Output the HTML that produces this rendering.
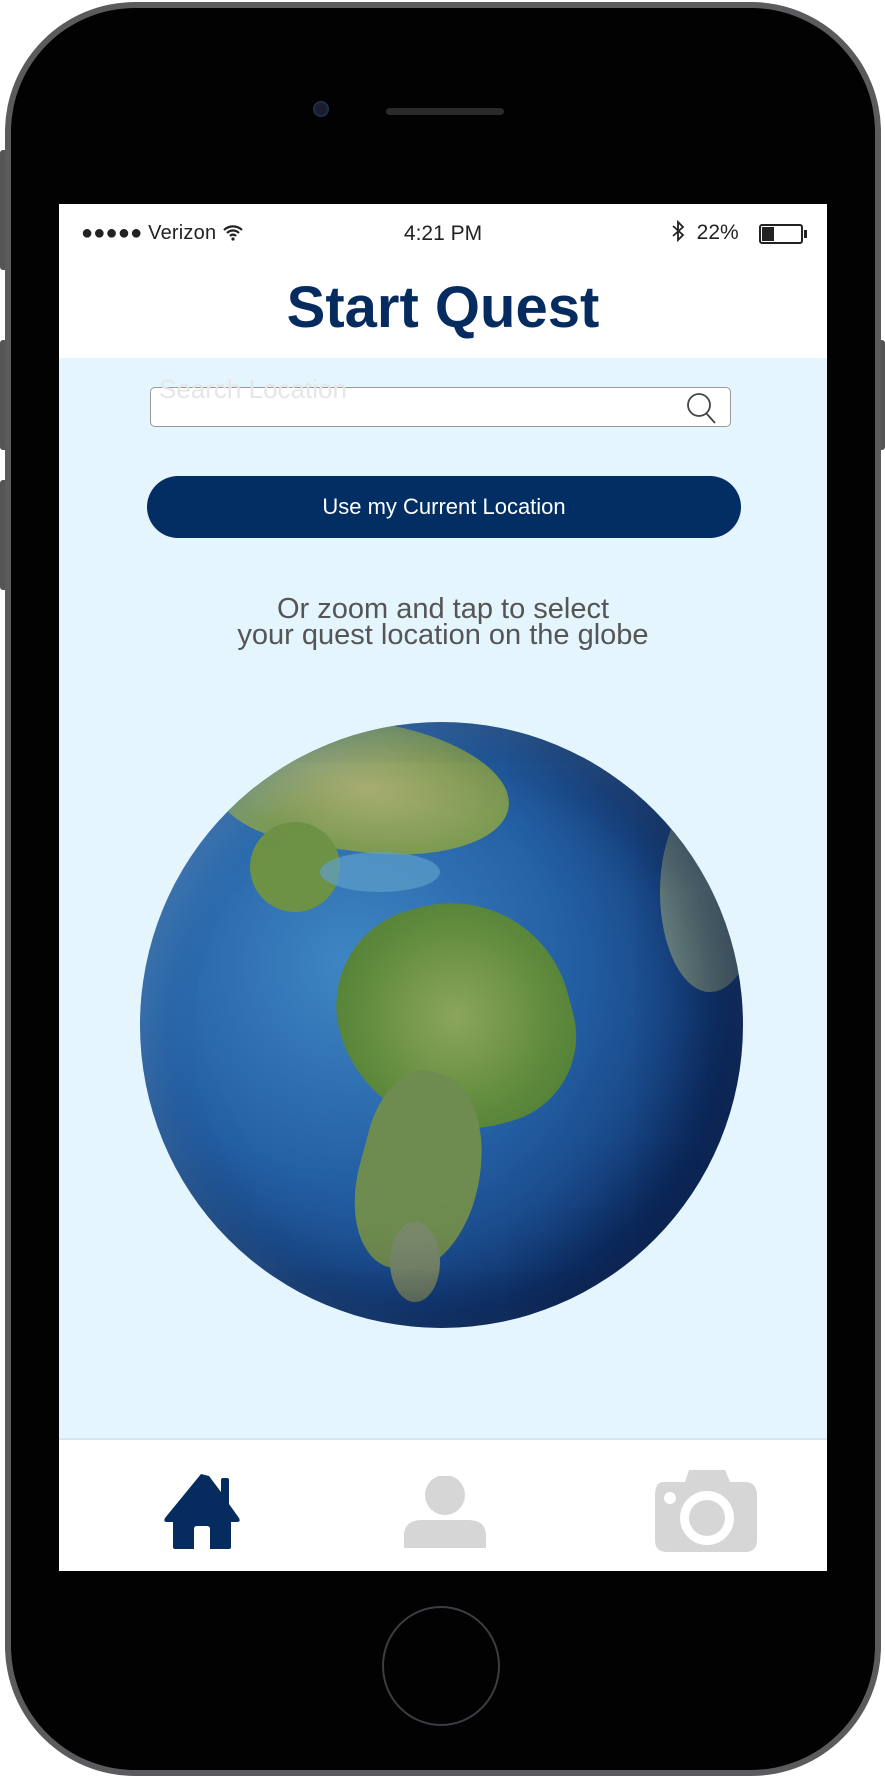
<!DOCTYPE html>
<html><head><meta charset="utf-8"><style>
*{margin:0;padding:0;box-sizing:border-box}
body{width:885px;height:1778px;background:#fff;position:relative;overflow:hidden;font-family:"Liberation Sans",sans-serif}
.abs{position:absolute}
</style></head><body>
<div class="abs" style="left:0;top:150px;width:8px;height:120px;background:#555;border-radius:3px"></div>
<div class="abs" style="left:0;top:340px;width:8px;height:110px;background:#555;border-radius:3px"></div>
<div class="abs" style="left:0;top:480px;width:8px;height:110px;background:#555;border-radius:3px"></div>
<div class="abs" style="right:0;top:340px;width:8px;height:110px;background:#555;border-radius:3px"></div>
<div class="abs" style="left:5px;top:2px;width:876px;height:1774px;border-radius:130px;background:#5b5b5e"></div>
<div class="abs" style="left:11px;top:8px;width:864px;height:1762px;border-radius:124px;background:#020202"></div>
<div class="abs" style="left:313px;top:101px;width:16px;height:16px;border-radius:50%;background:#1a1d2e;box-shadow:inset 0 0 3px #3a4a7a"></div>
<div class="abs" style="left:386px;top:108px;width:118px;height:7px;border-radius:4px;background:#2a2a2a"></div>
<div class="abs" style="left:382px;top:1606px;width:118px;height:120px;border-radius:50%;border:2px solid #3a3d42"></div>
<div class="abs" style="left:59px;top:204px;width:768px;height:1367px;background:#fff;overflow:hidden">
  <div class="abs" style="left:22px;top:18px;font-size:20px;color:#222;letter-spacing:.2px">●●●●● Verizon
    <svg width="22" height="18" viewBox="0 0 22 18" style="vertical-align:-2px"><path d="M2 7a13 13 0 0 1 18 0M5 10a8.5 8.5 0 0 1 12 0M8 13a4 4 0 0 1 6 0" stroke="#222" stroke-width="2.2" fill="none"/><circle cx="11" cy="16" r="1.6" fill="#222"/></svg></div>
  <div class="abs" style="left:0;width:768px;top:18px;text-align:center;font-size:21px;color:#222">4:21 PM</div>
  <div class="abs" style="left:612px;top:16px;font-size:21px;color:#222">
    <svg width="14" height="22" viewBox="0 0 14 22" style="vertical-align:-3px"><path d="M2 6l10 9-5 5V2l5 5-10 9" stroke="#222" stroke-width="1.8" fill="none"/></svg>
    &nbsp;22%</div>
  <div class="abs" style="left:700px;top:20px;width:44px;height:20px;border:2px solid #222;border-radius:3px"><div style="width:12px;height:14px;margin:1px;background:#222"></div></div>
  <div class="abs" style="left:745px;top:26px;width:3px;height:8px;background:#222"></div>
  <div class="abs" style="left:0;width:768px;top:70px;text-align:center;font-size:58px;font-weight:bold;color:#062c5f">Start Quest</div>
  <div class="abs" style="left:0;top:154px;width:768px;height:1082px;background:#e4f5fe;border-bottom:2px solid #d6e6ee">
    <div class="abs" style="left:91px;top:29px;width:581px;height:40px;background:#fff;border:1px solid #999;border-radius:5px"></div>
    <div class="abs" style="left:100px;top:16px;font-size:26px;color:#e6e6e6">Search Location</div>
    <svg class="abs" style="left:625px;top:33px" width="36" height="34" viewBox="0 0 36 34"><circle cx="15" cy="14" r="11" stroke="#444" stroke-width="1.8" fill="none"/><path d="M22 22l9 10" stroke="#444" stroke-width="1.8"/></svg>
    <div class="abs" style="left:88px;top:118px;width:594px;height:62px;background:#022e63;border-radius:31px;color:#fff;font-size:22px;text-align:center;line-height:62px">Use my Current Location</div>
    <div class="abs" style="left:0;width:768px;top:238px;text-align:center;font-size:29px;line-height:26px;color:#555">Or zoom and tap to select<br>your quest location on the globe</div>
    <div class="abs" style="left:81px;top:364px;width:603px;height:606px;border-radius:50%;overflow:hidden;background:radial-gradient(circle at 35% 40%,#3f86c4 0%,#2460a4 40%,#123a78 75%,#0b2350 100%)">
      <div class="abs" style="left:200px;top:180px;width:230px;height:230px;border-radius:45% 55% 40% 60%;background:radial-gradient(#8ba65c,#5f8a3c 60%,#4a7a38);transform:rotate(-15deg)"></div>
      <div class="abs" style="left:220px;top:350px;width:120px;height:200px;border-radius:40% 60% 50% 50%;background:#6f8c50;transform:rotate(15deg)"></div>
      <div class="abs" style="left:250px;top:500px;width:50px;height:80px;border-radius:50%;background:#7a8a6a"></div>
      <div class="abs" style="left:80px;top:0;width:290px;height:130px;border-radius:40% 60% 60% 40%;background:radial-gradient(#a8ae72,#7c9a52 70%);transform:rotate(8deg)"></div>
      <div class="abs" style="left:110px;top:100px;width:90px;height:90px;border-radius:50%;background:#6e9245"></div>
      <div class="abs" style="left:180px;top:130px;width:120px;height:40px;border-radius:50%;background:#5da0c9;opacity:.7"></div>
      <div class="abs" style="left:520px;top:70px;width:100px;height:200px;border-radius:50%;background:#8aa088;opacity:.8"></div>
      <div class="abs" style="left:0;top:0;width:603px;height:606px;border-radius:50%;box-shadow:inset -40px -20px 80px rgba(0,10,40,.6),inset 10px 10px 40px rgba(150,200,240,.3)"></div>
    </div>
  </div>
  <svg class="abs" style="left:104px;top:1270px" width="78" height="76" viewBox="0 0 78 76"><path fill-rule="evenodd" d="M38 0 L2 44 Q0 48 4 48 H10 V73 Q10 75 12 75 H66 Q68 75 68 73 V48 H74 Q78 48 76 44 L66 30 V6 Q66 4 64 4 H60 Q58 4 58 6 V18 L46 2 Z M31 75 V55 Q31 52 34 52 H44 Q47 52 47 55 V75 Z" fill="#062c5f"/></svg>
  <svg class="abs" style="left:345px;top:1272px" width="82" height="72" viewBox="0 0 82 72"><ellipse cx="41" cy="19" rx="20" ry="20" fill="#d6d6d6"/><path d="M0 72 V60 Q0 44 18 44 H64 Q82 44 82 60 V72Z" fill="#d6d6d6"/></svg>
  <svg class="abs" style="left:596px;top:1262px" width="102" height="86" viewBox="0 0 102 86"><path d="M8 16 H30 L34 4 H70 L75 16 H90 Q102 16 102 30 V74 Q102 86 90 86 H12 Q0 86 0 74 V30 Q0 16 8 16Z" fill="#d6d6d6"/><circle cx="52" cy="52" r="27" fill="#fff"/><circle cx="52" cy="52" r="18" fill="#d6d6d6"/><circle cx="15" cy="32" r="6" fill="#fff"/></svg>
</div>
</body></html>
